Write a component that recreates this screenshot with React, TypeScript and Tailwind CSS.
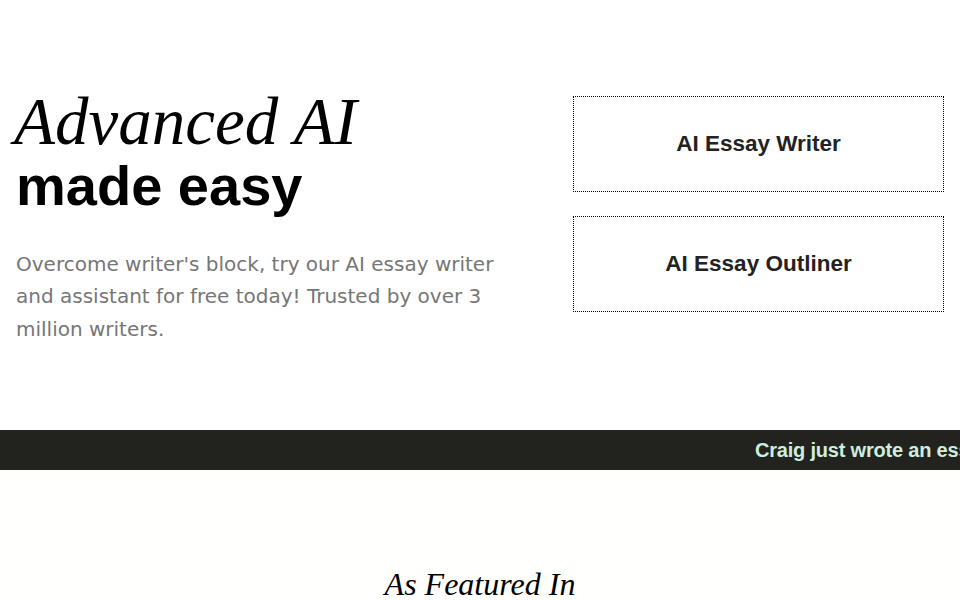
import React from "react";

export default function App() {
  return (
    <div className="w-[960px] h-[600px] overflow-hidden bg-white">
      <section className="flex gap-10 px-4 pt-[88px] h-[430px]">
        <div className="w-[517px]">
          <h1 className="m-0">
            <span
              className="block italic text-[67px] leading-none text-black -ml-[2px]"
              style={{ fontFamily: '"Liberation Serif", serif' }}
            >
              Advanced AI
            </span>
            <span
              className="block font-bold text-[56px] leading-[1.1] text-black"
              style={{ fontFamily: '"Liberation Sans", sans-serif' }}
            >
              made easy
            </span>
          </h1>
          <p
            className="mt-[31px] w-[500px] text-[20px] leading-[32.5px] text-[#767676]"
            style={{ fontFamily: '"DejaVu Sans", sans-serif' }}
          >
            Overcome writer's block, try our AI essay writer and assistant for free today! Trusted by over 3 million writers.
          </p>
        </div>
        <div className="w-[371px] flex flex-col gap-6 pt-2">
          <a className="h-24 border border-dotted border-black flex items-center justify-center text-[22.5px] font-bold text-[#222]" style={{ fontFamily: '"Liberation Sans", sans-serif' }}>
            AI Essay Writer
          </a>
          <a className="h-24 border border-dotted border-black flex items-center justify-center text-[22.5px] font-bold text-[#222]" style={{ fontFamily: '"Liberation Sans", sans-serif' }}>
            AI Essay Outliner
          </a>
        </div>
      </section>
      <div className="h-10 bg-[#22221f] flex items-center overflow-hidden whitespace-nowrap pl-[755px]">
        <span className="text-[20px] font-bold text-[#cdeedd] tracking-[-0.2px]" style={{ fontFamily: '"Liberation Sans", sans-serif' }}>
          Craig just wrote an essay about climate change
        </span>
      </div>
      <div className="h-[130px] bg-[#fffffd] flex flex-col items-center pt-[98px]">
        <h2 className="italic text-[32px] leading-none text-black" style={{ fontFamily: '"Liberation Serif", serif' }}>
          As Featured In
        </h2>
      </div>
    </div>
  );
}
